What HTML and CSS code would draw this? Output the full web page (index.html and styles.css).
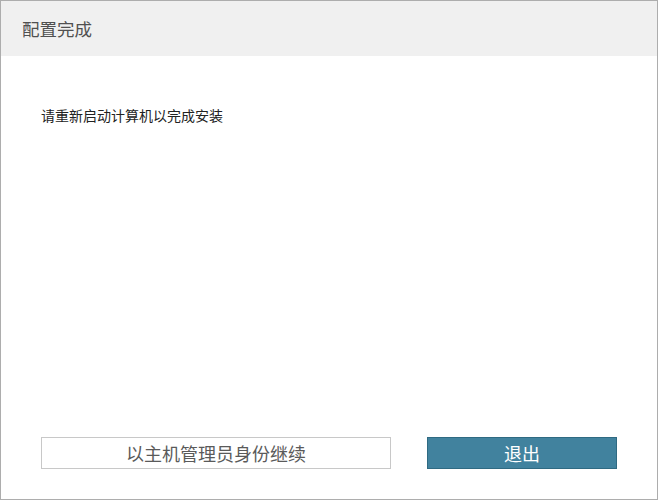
FILE: index.html
```html
<!DOCTYPE html>
<html>
<head>
<meta charset="utf-8">
<link rel="stylesheet" href="styles.css">
</head>
<body>
<div class="window">
  <div class="header"><span class="title">配置完成</span></div>
  <div class="content">
    <p class="message">请重新启动计算机以完成安装</p>
    <div class="actions">
      <button class="btn btn-secondary">以主机管理员身份继续</button>
      <button class="btn btn-primary">退出</button>
    </div>
  </div>
</div>
</body>
</html>
```
FILE: styles.css
```css
html, body {
  margin: 0;
  padding: 0;
  background: #fff;
}
.window {
  box-sizing: border-box;
  width: 658px;
  height: 500px;
  border: 1px solid #adadad;
  display: flex;
  flex-direction: column;
  font-family: "Noto Sans CJK SC", "Liberation Sans", sans-serif;
}
.header {
  height: 55px;
  background: #f0f0f0;
  display: flex;
  align-items: center;
  padding-left: 21px;
}
.title {
  font-size: 17.5px;
  color: #505050;
}
.content {
  flex: 1;
  display: flex;
  flex-direction: column;
  padding: 0 40px 30px 40px;
}
.message {
  margin: 50px 0 0 0;
  font-size: 14px;
  line-height: 18px;
  color: #222;
}
.actions {
  margin-top: auto;
  display: flex;
  gap: 36px;
}
.btn {
  box-sizing: border-box;
  height: 32px;
  font-family: inherit;
  font-size: 18px;
  line-height: 1;
  padding: 0;
  cursor: pointer;
}
.btn-secondary {
  width: 350px;
  background: #fff;
  border: 1px solid #c8c8c8;
  color: #5a5a5a;
}
.btn-primary {
  width: 190px;
  background: #41829e;
  border: 1px solid #2f6a82;
  color: #fff;
}
```
